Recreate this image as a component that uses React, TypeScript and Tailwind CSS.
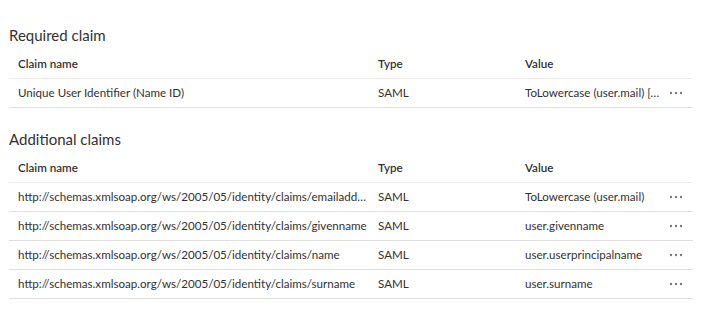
type Claim = { name: string; type: string; value: string };

const required: Claim[] = [
  { name: "Unique User Identifier (Name ID)", type: "SAML", value: "ToLowercase (user.mail) [nameid-format:emailAddress]" },
];

const additional: Claim[] = [
  { name: "http://schemas.xmlsoap.org/ws/2005/05/identity/claims/emailaddress", type: "SAML", value: "ToLowercase (user.mail)" },
  { name: "http://schemas.xmlsoap.org/ws/2005/05/identity/claims/givenname", type: "SAML", value: "user.givenname" },
  { name: "http://schemas.xmlsoap.org/ws/2005/05/identity/claims/name", type: "SAML", value: "user.userprincipalname" },
  { name: "http://schemas.xmlsoap.org/ws/2005/05/identity/claims/surname", type: "SAML", value: "user.surname" },
];

function MoreDots() {
  return (
    <svg width="14" height="4" viewBox="0 0 14 4" className="text-[#7a7876]">
      <circle cx="2" cy="2" r="1.2" fill="currentColor" />
      <circle cx="7" cy="2" r="1.2" fill="currentColor" />
      <circle cx="12" cy="2" r="1.2" fill="currentColor" />
    </svg>
  );
}

function ClaimTable({ title, rows }: { title: string; rows: Claim[] }) {
  return (
    <section>
      <h2 className="text-[15px] leading-5 text-[#323130] pl-[9px] pt-[5px] pb-[5px]">{title}</h2>
      <div className="mx-[9px] w-[684px]">
        <div className="grid grid-cols-[360px_147px_144px_33px] h-[29px] items-center border-b border-[#edebe9] font-semibold">
          <div className="pl-[9px]">Claim name</div>
          <div className="pl-[9px]">Type</div>
          <div className="pl-[9px]">Value</div>
          <div />
        </div>
        {rows.map((r) => (
          <div key={r.name} className="grid grid-cols-[360px_147px_144px_33px] h-[29px] items-center border-b border-[#e1dfdd]">
            <div className="pl-[9px] min-w-0 truncate">{r.name}</div>
            <div className="pl-[9px] min-w-0 truncate">{r.type}</div>
            <div className="pl-[9px] min-w-0 truncate">{r.value}</div>
            <div className="flex justify-center pr-[2px]">
              <MoreDots />
            </div>
          </div>
        ))}
      </div>
    </section>
  );
}

export default function App() {
  return (
    <div className="w-[711px] h-[312px] bg-white text-[11.6px] text-[#323130] pt-[20px] font-['Segoe_UI','Lato',sans-serif]">
      <ClaimTable title="Required claim" rows={required} />
      <div className="h-[16px]" />
      <ClaimTable title="Additional claims" rows={additional} />
    </div>
  );
}
